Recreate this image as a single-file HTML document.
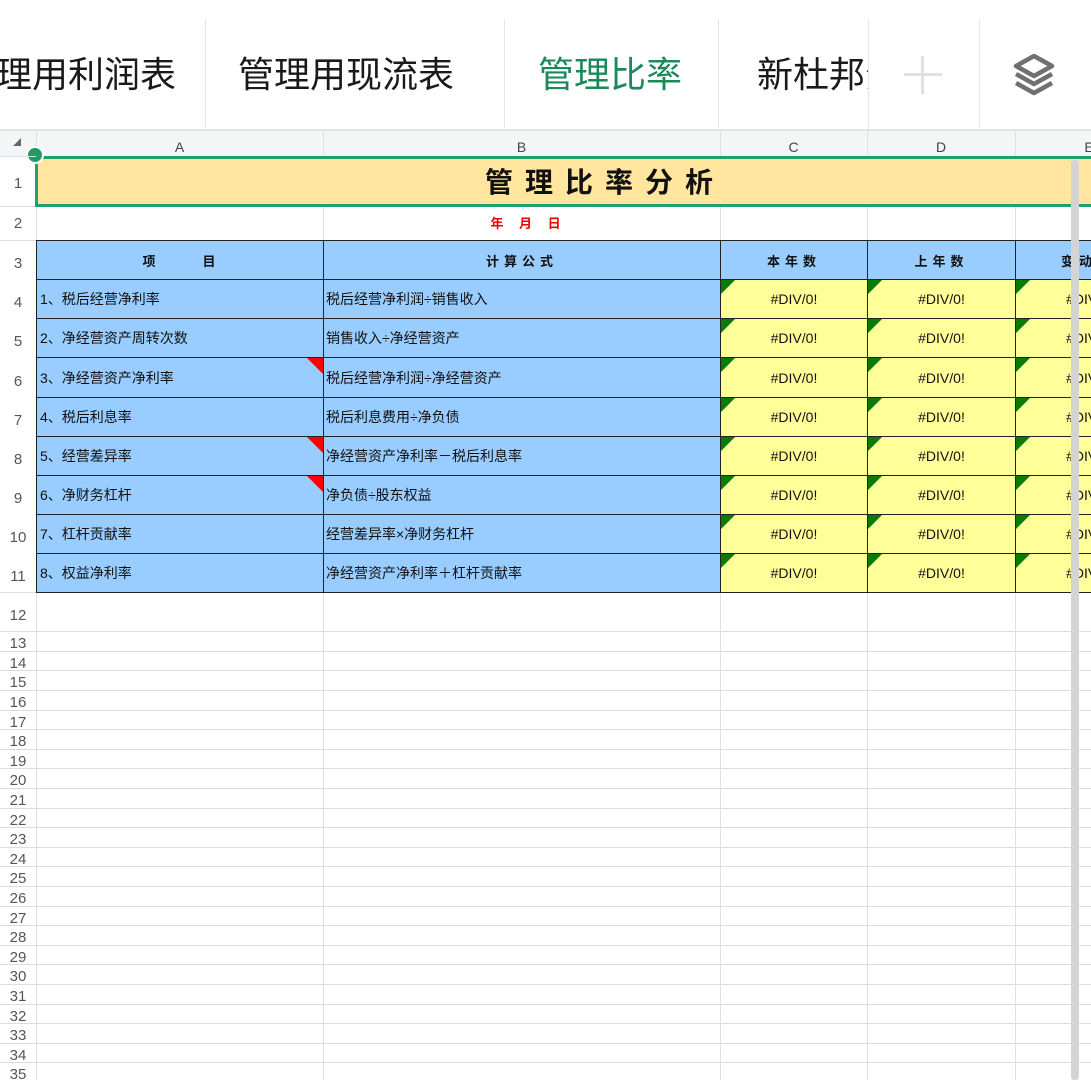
<!DOCTYPE html>
<html><head><meta charset="utf-8"><style>
*{margin:0;padding:0;box-sizing:border-box}
body{width:1091px;height:1080px;overflow:hidden;background:#fff;position:relative;font-family:"Liberation Sans","Noto Sans CJK SC",sans-serif}
.a{position:absolute}
.tab{position:absolute;top:50px;font-size:36px;color:#1a1a1a;white-space:nowrap;line-height:50px}
.sep{position:absolute;top:19px;height:111px;width:1px;background:#e6e6e6}
.rh{position:absolute;left:0;width:36px;text-align:center;color:#555;font-size:15px}
.hl{position:absolute;left:0;width:1091px;height:1px;background:#dcdcdc}
.vl{position:absolute;top:130px;height:950px;width:1px;background:#e0e0e0}
.c{position:absolute;font-size:14px;color:#111;display:flex;align-items:center;white-space:nowrap;overflow:hidden}
.bl{background:#99ccff;border:1px solid #222}
.ye{background:#ffff99;border:1px solid #222;justify-content:center}
.gt{position:absolute;width:0;height:0;border-top:14px solid #0a7a0a;border-right:14px solid transparent}
.rt{position:absolute;width:0;height:0;border-top:16px solid #f00;border-left:16px solid transparent}
</style></head><body>
<div class="tab" style="left:-4px">理用利润表</div>
<div class="sep" style="left:205px"></div>
<div class="tab" style="left:238px">管理用现流表</div>
<div class="sep" style="left:504px"></div>
<div class="tab" style="left:538px;color:#1a8a5a">管理比率</div>
<div class="sep" style="left:718px"></div>
<div class="a" style="left:719px;top:19px;width:149px;height:111px;overflow:hidden"><div class="tab" style="left:38px;top:31px">新杜邦分析</div></div>
<div class="sep" style="left:868px"></div>
<div class="a" style="left:904px;top:73px;width:38px;height:3px;background:#e0e0e0"></div>
<div class="a" style="left:921px;top:56px;width:3px;height:38px;background:#e0e0e0"></div>
<div class="sep" style="left:979px"></div>
<svg class="a" style="left:1012px;top:52px" width="44" height="46" viewBox="0 0 44 46"><g fill="none" stroke="#707070" stroke-width="4.5" stroke-linejoin="round"><path d="M22 4 L40 14 L22 24 L4 14 Z"/><path d="M4 22 L22 32 L40 22"/><path d="M4 31 L22 41 L40 31"/></g></svg>
<div class="a" style="left:0;top:129px;width:1091px;height:2px;background:#e4e4e4"></div>
<div class="a" style="left:0;top:131px;width:1091px;height:25px;background:#f4f5f7"></div>
<div class="a" style="left:0;top:156px;width:36px;height:924px;background:#fff"></div>
<div class="a" style="left:13px;top:138px;width:0;height:0;border-bottom:8px solid #666;border-left:8px solid transparent"></div>
<div class="a" style="left:36px;top:131px;width:287px;text-align:center;font-size:14px;color:#444;line-height:32px">A</div>
<div class="a" style="left:323px;top:131px;width:397px;text-align:center;font-size:14px;color:#444;line-height:32px">B</div>
<div class="a" style="left:720px;top:131px;width:147px;text-align:center;font-size:14px;color:#444;line-height:32px">C</div>
<div class="a" style="left:867px;top:131px;width:148px;text-align:center;font-size:14px;color:#444;line-height:32px">D</div>
<div class="a" style="left:1015px;top:131px;width:148px;text-align:center;font-size:14px;color:#444;line-height:32px">E</div>
<div class="vl" style="left:36px"></div><div class="vl" style="left:323px"></div><div class="vl" style="left:720px"></div><div class="vl" style="left:867px"></div><div class="vl" style="left:1015px"></div>
<div class="hl" style="top:592px"></div><div class="hl" style="top:631px"></div>
<div class="hl" style="top:651px"></div><div class="hl" style="top:670px"></div><div class="hl" style="top:690px"></div><div class="hl" style="top:710px"></div><div class="hl" style="top:729px"></div><div class="hl" style="top:749px"></div><div class="hl" style="top:768px"></div><div class="hl" style="top:788px"></div><div class="hl" style="top:808px"></div><div class="hl" style="top:827px"></div><div class="hl" style="top:847px"></div><div class="hl" style="top:866px"></div><div class="hl" style="top:886px"></div><div class="hl" style="top:906px"></div><div class="hl" style="top:925px"></div><div class="hl" style="top:945px"></div><div class="hl" style="top:964px"></div><div class="hl" style="top:984px"></div><div class="hl" style="top:1004px"></div><div class="hl" style="top:1023px"></div><div class="hl" style="top:1043px"></div><div class="hl" style="top:1062px"></div>
<div class="hl" style="top:206px"></div><div class="hl" style="top:240px"></div>
<div class="a" style="left:35px;top:156px;width:1056px;height:51px;background:#ffe59d;border-top:3px solid #22a06b;border-bottom:3px solid #22a06b;border-left:3px solid #22a06b"></div>
<div class="a" style="left:40px;top:160px;width:1130px;text-align:center;font-size:28px;font-weight:bold;letter-spacing:12px;line-height:46px;color:#111">管理比率分析</div>
<div class="a" style="left:26px;top:146px;width:18px;height:18px;border-radius:50%;background:#1e9c64;border:2px solid #fff"></div>
<div class="a" style="left:330px;top:213px;width:397px;text-align:center;font-size:13px;font-weight:bold;color:#e00;letter-spacing:6px">年 月 日</div>
<div class="c bl" style="left:36px;top:240px;width:288px;height:40px;justify-content:center;font-weight:bold;font-size:13px;letter-spacing:2px">项&nbsp;&nbsp;&nbsp;&nbsp;&nbsp;&nbsp;&nbsp;&nbsp;目</div>
<div class="c bl" style="left:323px;top:240px;width:398px;height:40px;justify-content:center;font-weight:bold;font-size:13px;letter-spacing:5px">计算公式</div>
<div class="c bl" style="left:720px;top:240px;width:148px;height:40px;justify-content:center;font-weight:bold;font-size:13px;letter-spacing:5px">本年数</div>
<div class="c bl" style="left:867px;top:240px;width:149px;height:40px;justify-content:center;font-weight:bold;font-size:13px;letter-spacing:5px">上年数</div>
<div class="c bl" style="left:1015px;top:240px;width:149px;height:40px;padding-left:45px;font-weight:bold;font-size:13px;letter-spacing:5px">变动</div>
<div class="c bl" style="left:36px;top:279px;width:288px;height:40px;padding-left:3px">1、税后经营净利率</div><div class="c bl" style="left:323px;top:279px;width:398px;height:40px;padding-left:2px">税后经营净利润÷销售收入</div>
<div class="c bl" style="left:36px;top:318px;width:288px;height:40px;padding-left:3px">2、净经营资产周转次数</div><div class="c bl" style="left:323px;top:318px;width:398px;height:40px;padding-left:2px">销售收入÷净经营资产</div>
<div class="c bl" style="left:36px;top:357px;width:288px;height:41px;padding-left:3px">3、净经营资产净利率</div><div class="c bl" style="left:323px;top:357px;width:398px;height:41px;padding-left:2px">税后经营净利润÷净经营资产</div>
<div class="c bl" style="left:36px;top:397px;width:288px;height:40px;padding-left:3px">4、税后利息率</div><div class="c bl" style="left:323px;top:397px;width:398px;height:40px;padding-left:2px">税后利息费用÷净负债</div>
<div class="c bl" style="left:36px;top:436px;width:288px;height:40px;padding-left:3px">5、经营差异率</div><div class="c bl" style="left:323px;top:436px;width:398px;height:40px;padding-left:2px">净经营资产净利率－税后利息率</div>
<div class="c bl" style="left:36px;top:475px;width:288px;height:40px;padding-left:3px">6、净财务杠杆</div><div class="c bl" style="left:323px;top:475px;width:398px;height:40px;padding-left:2px">净负债÷股东权益</div>
<div class="c bl" style="left:36px;top:514px;width:288px;height:40px;padding-left:3px">7、杠杆贡献率</div><div class="c bl" style="left:323px;top:514px;width:398px;height:40px;padding-left:2px">经营差异率×净财务杠杆</div>
<div class="c bl" style="left:36px;top:553px;width:288px;height:40px;padding-left:3px">8、权益净利率</div><div class="c bl" style="left:323px;top:553px;width:398px;height:40px;padding-left:2px">净经营资产净利率＋杠杆贡献率</div>
<div class="rt" style="left:307px;top:358px"></div><div class="rt" style="left:307px;top:437px"></div><div class="rt" style="left:307px;top:476px"></div>
<div class="c ye" style="left:720px;top:279px;width:148px;height:40px">#DIV/0!</div><div class="c ye" style="left:867px;top:279px;width:149px;height:40px">#DIV/0!</div><div class="c ye" style="left:1015px;top:279px;width:149px;height:40px">#DIV/0!</div>
<div class="c ye" style="left:720px;top:318px;width:148px;height:40px">#DIV/0!</div><div class="c ye" style="left:867px;top:318px;width:149px;height:40px">#DIV/0!</div><div class="c ye" style="left:1015px;top:318px;width:149px;height:40px">#DIV/0!</div>
<div class="c ye" style="left:720px;top:357px;width:148px;height:41px">#DIV/0!</div><div class="c ye" style="left:867px;top:357px;width:149px;height:41px">#DIV/0!</div><div class="c ye" style="left:1015px;top:357px;width:149px;height:41px">#DIV/0!</div>
<div class="c ye" style="left:720px;top:397px;width:148px;height:40px">#DIV/0!</div><div class="c ye" style="left:867px;top:397px;width:149px;height:40px">#DIV/0!</div><div class="c ye" style="left:1015px;top:397px;width:149px;height:40px">#DIV/0!</div>
<div class="c ye" style="left:720px;top:436px;width:148px;height:40px">#DIV/0!</div><div class="c ye" style="left:867px;top:436px;width:149px;height:40px">#DIV/0!</div><div class="c ye" style="left:1015px;top:436px;width:149px;height:40px">#DIV/0!</div>
<div class="c ye" style="left:720px;top:475px;width:148px;height:40px">#DIV/0!</div><div class="c ye" style="left:867px;top:475px;width:149px;height:40px">#DIV/0!</div><div class="c ye" style="left:1015px;top:475px;width:149px;height:40px">#DIV/0!</div>
<div class="c ye" style="left:720px;top:514px;width:148px;height:40px">#DIV/0!</div><div class="c ye" style="left:867px;top:514px;width:149px;height:40px">#DIV/0!</div><div class="c ye" style="left:1015px;top:514px;width:149px;height:40px">#DIV/0!</div>
<div class="c ye" style="left:720px;top:553px;width:148px;height:40px">#DIV/0!</div><div class="c ye" style="left:867px;top:553px;width:149px;height:40px">#DIV/0!</div><div class="c ye" style="left:1015px;top:553px;width:149px;height:40px">#DIV/0!</div>
<div class="gt" style="left:721px;top:280px"></div><div class="gt" style="left:868px;top:280px"></div><div class="gt" style="left:1016px;top:280px"></div>
<div class="gt" style="left:721px;top:319px"></div><div class="gt" style="left:868px;top:319px"></div><div class="gt" style="left:1016px;top:319px"></div>
<div class="gt" style="left:721px;top:358px"></div><div class="gt" style="left:868px;top:358px"></div><div class="gt" style="left:1016px;top:358px"></div>
<div class="gt" style="left:721px;top:398px"></div><div class="gt" style="left:868px;top:398px"></div><div class="gt" style="left:1016px;top:398px"></div>
<div class="gt" style="left:721px;top:437px"></div><div class="gt" style="left:868px;top:437px"></div><div class="gt" style="left:1016px;top:437px"></div>
<div class="gt" style="left:721px;top:476px"></div><div class="gt" style="left:868px;top:476px"></div><div class="gt" style="left:1016px;top:476px"></div>
<div class="gt" style="left:721px;top:515px"></div><div class="gt" style="left:868px;top:515px"></div><div class="gt" style="left:1016px;top:515px"></div>
<div class="gt" style="left:721px;top:554px"></div><div class="gt" style="left:868px;top:554px"></div><div class="gt" style="left:1016px;top:554px"></div>
<div class="a" style="left:1071px;top:160px;width:8px;height:920px;background:#d4d4d4;border-radius:3px"></div>
<div class="a" style="left:0;top:156px;width:36px;height:1px;background:#ddd"></div>
<div class="rh" style="top:175px">1</div><div class="rh" style="top:215px">2</div><div class="rh" style="top:255px">3</div><div class="rh" style="top:294px">4</div><div class="rh" style="top:333px">5</div><div class="rh" style="top:373px">6</div><div class="rh" style="top:412px">7</div><div class="rh" style="top:451px">8</div><div class="rh" style="top:490px">9</div><div class="rh" style="top:529px">10</div><div class="rh" style="top:568px">11</div><div class="rh" style="top:607px">12</div>
<div class="rh" style="top:635px">13</div><div class="rh" style="top:655px">14</div><div class="rh" style="top:674px">15</div><div class="rh" style="top:694px">16</div><div class="rh" style="top:714px">17</div><div class="rh" style="top:733px">18</div><div class="rh" style="top:753px">19</div><div class="rh" style="top:772px">20</div><div class="rh" style="top:792px">21</div><div class="rh" style="top:812px">22</div><div class="rh" style="top:831px">23</div><div class="rh" style="top:851px">24</div><div class="rh" style="top:870px">25</div><div class="rh" style="top:890px">26</div><div class="rh" style="top:910px">27</div><div class="rh" style="top:929px">28</div><div class="rh" style="top:949px">29</div><div class="rh" style="top:968px">30</div><div class="rh" style="top:988px">31</div><div class="rh" style="top:1008px">32</div><div class="rh" style="top:1027px">33</div><div class="rh" style="top:1047px">34</div><div class="rh" style="top:1066px">35</div>
</body></html>
